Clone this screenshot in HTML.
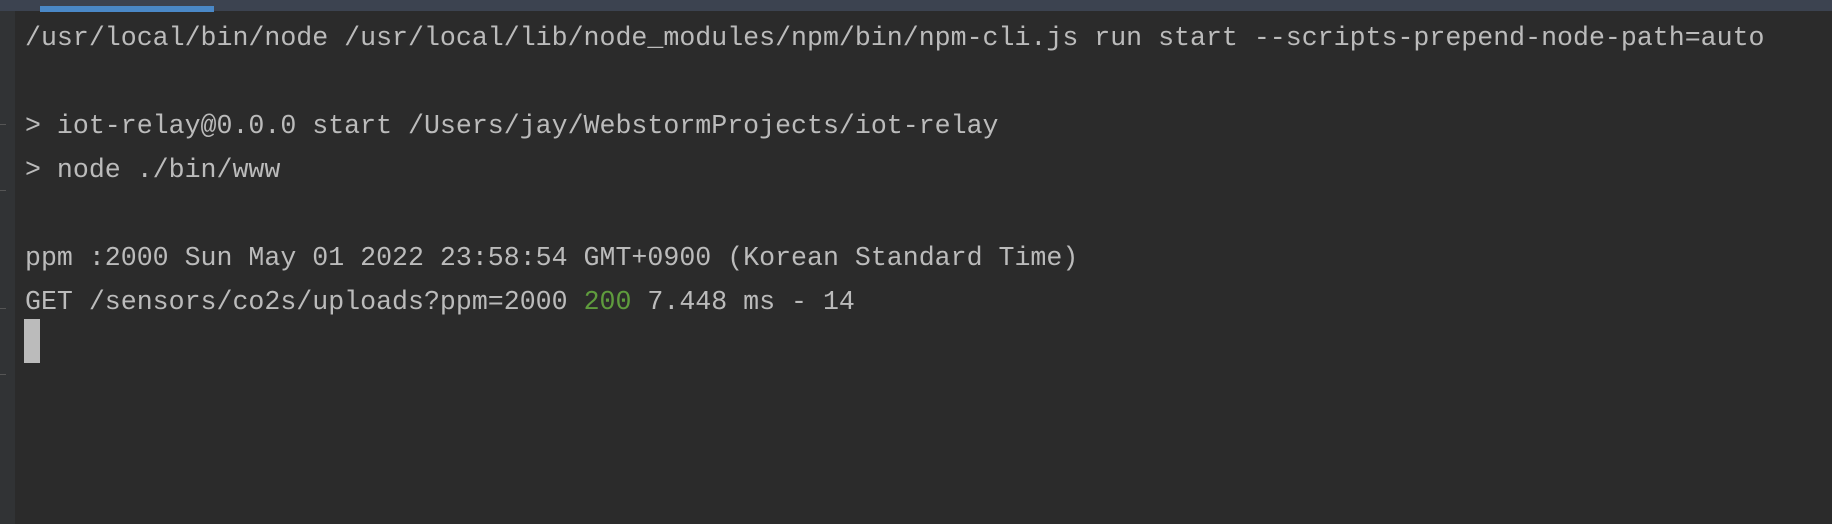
<!DOCTYPE html>
<html><head><meta charset="utf-8"><style>
html,body{margin:0;padding:0}
body{width:1832px;height:524px;background:#2b2b2b;position:relative;overflow:hidden;font-family:"Liberation Mono","DejaVu Sans Mono",monospace}
.top{position:absolute;left:0;top:0;width:1832px;height:11px;background:#3c4350}
.tab{position:absolute;left:40px;top:6px;width:174px;height:6px;background:#4a88c7}
.gut{position:absolute;left:0;top:11px;width:15px;height:513px;background:#313335}
.tick{position:absolute;left:0;width:6px;height:1px;background:#555}
.txt{position:absolute;left:25px;top:16px;font-size:26.6px;line-height:44px;color:#bbbbbb;white-space:pre}
.g{color:#5f9c3d}
.cur{position:absolute;left:24px;top:319px;width:16px;height:44px;background:#bbbbbb}
</style></head><body>
<div class="top"></div><div class="tab"></div>
<div class="gut"></div>
<div class="tick" style="top:124px"></div><div class="tick" style="top:190px"></div><div class="tick" style="top:308px"></div><div class="tick" style="top:374px"></div>
<div class="txt">/usr/local/bin/node /usr/local/lib/node_modules/npm/bin/npm-cli.js run start --scripts-prepend-node-path=auto

&gt; iot-relay@0.0.0 start /Users/jay/WebstormProjects/iot-relay
&gt; node ./bin/www

ppm :2000 Sun May 01 2022 23:58:54 GMT+0900 (Korean Standard Time)
GET /sensors/co2s/uploads?ppm=2000 <span class="g">200</span> 7.448 ms - 14</div>
<div class="cur"></div>
</body></html>
